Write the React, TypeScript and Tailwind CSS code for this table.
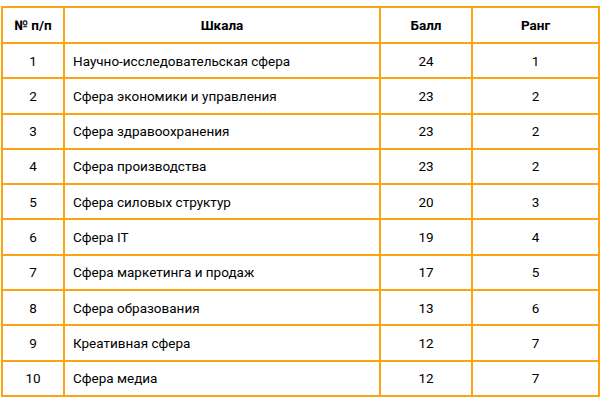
const rows: [number, string, number, number][] = [
  [1, 'Научно-исследовательская сфера', 24, 1],
  [2, 'Сфера экономики и управления', 23, 2],
  [3, 'Сфера здравоохранения', 23, 2],
  [4, 'Сфера производства', 23, 2],
  [5, 'Сфера силовых структур', 20, 3],
  [6, 'Сфера IT', 19, 4],
  [7, 'Сфера маркетинга и продаж', 17, 5],
  [8, 'Сфера образования', 13, 6],
  [9, 'Креативная сфера', 12, 7],
  [10, 'Сфера медиа', 12, 7],
];

const cell = 'border-2 border-[#fca311] p-0';

export default function App() {
  return (
    <div className="w-[600px] h-[400px] bg-white pt-[6px] pl-[1px] font-['Roboto',sans-serif] text-[13.5px] text-black">
      <table className="border-collapse w-[597px] table-fixed">
        <colgroup>
          <col className="w-[62px]" />
          <col className="w-[316px]" />
          <col className="w-[92px]" />
          <col className="w-[127px]" />
        </colgroup>
        <thead>
          <tr className="h-[36px] font-bold">
            <th className={`${cell} text-center`}>№ п/п</th>
            <th className={`${cell} text-center`}>Шкала</th>
            <th className={`${cell} text-center`}>Балл</th>
            <th className={`${cell} text-center`}>Ранг</th>
          </tr>
        </thead>
        <tbody>
          {rows.map(([n, name, score, rank]) => (
            <tr key={n} className="h-[35.3px]">
              <td className={`${cell} text-center`}>{n}</td>
              <td className={`${cell} pl-[8px]`}>{name}</td>
              <td className={`${cell} text-center`}>{score}</td>
              <td className={`${cell} text-center`}>{rank}</td>
            </tr>
          ))}
        </tbody>
      </table>
    </div>
  );
}
